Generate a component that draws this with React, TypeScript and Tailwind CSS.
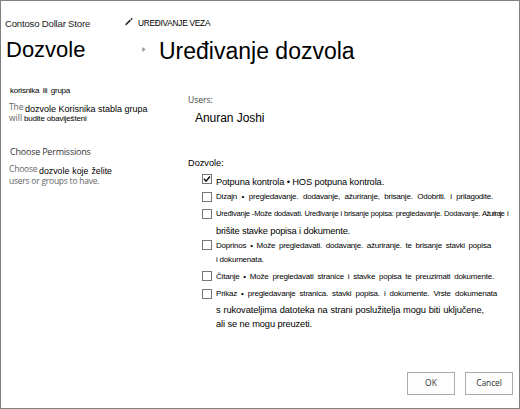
import { clsx } from 'clsx'
import type { ReactNode } from 'react'

const PERMISSIONS = [
  {
    checked: true,
    className: 'h-[18px]',
    lines: [
      {
        text: 'Potpuna kontrola • HOS potpuna kontrola.',
        className: 'mt-[2px] w-[168px] text-[9.3px] tracking-[-0.13px]',
      },
    ],
  },
  {
    className: 'h-[17px]',
    lines: [
      {
        text: 'Dizajn • pregledavanje. dodavanje, ažuriranje, brisanje. Odobriti. i prilagodite.',
        className: '-mt-[1px] w-[277px] text-[8px] tracking-[-0.2px]',
      },
    ],
  },
  {
    className: 'h-[31px]',
    lines: [
      {
        text: 'Uređivanje -Može dodavati. Uređivanje i brisanje popisa: pregledavanje. Dodavanje.',
        tail: true,
        className: '-mt-[1px] w-[264px] text-[7.6px] tracking-[-0.25px]',
      },
      {
        text: 'brišite stavke popisa i dokumente.',
        className: 'mt-[5px] w-[134px] text-[9.3px] tracking-[-0.2px]',
      },
    ],
  },
  {
    className: 'h-[31px]',
    lines: [
      {
        text: 'Doprinos • Može pregledavati. dodavanje. ažuriranje. te brisanje stavki popisa',
        className: 'w-[275px] text-[8px] tracking-[-0.2px]',
      },
      { text: 'i dokumenata.', className: 'mt-[2px] w-[47px] text-[8px] tracking-[-0.2px]' },
    ],
  },
  {
    className: 'h-[18px]',
    lines: [
      {
        text: 'Čitanje • Može pregledavati stranice i stavke popisa te preuzimati dokumente.',
        className: 'w-[278px] text-[8px] tracking-[-0.2px]',
      },
    ],
  },
  {
    className: 'h-[40px]',
    lines: [
      {
        text: 'Prikaz • pregledavanje stranica. stavki popisa. i dokumente. Vrste dokumenata',
        className: '-mt-[1px] w-[281px] text-[8px] tracking-[-0.2px]',
      },
      {
        text: 's rukovateljima datoteka na strani poslužitelja mogu biti uključene,',
        className: 'mt-[4px] w-[268px] text-[9.3px] tracking-[-0.1px]',
      },
      { text: 'ali se ne mogu preuzeti.', className: 'mt-[2px] w-[96px] text-[9.3px] tracking-[-0.13px]' },
    ],
  },
]

function Line({ className, children }: { className: string; children: ReactNode }) {
  return (
    <div className={clsx('h-3 leading-3 whitespace-nowrap [text-align-last:justify]', className)}>
      {children}
    </div>
  )
}

function Checkbox({ checked }: { checked?: boolean }) {
  return (
    <span className="flex h-[10px] w-[10px] shrink-0 items-center justify-center border border-[#777] bg-white">
      {checked && (
        <svg viewBox="0 0 8 8" className="h-2 w-2" fill="none" stroke="#111" strokeWidth="1.5">
          <path d="M1 3.8 3 6.2 7 1.4" />
        </svg>
      )}
    </span>
  )
}

export default function App() {
  return (
    <main className="flex h-[409px] w-[520px] flex-col overflow-hidden border border-[#808080] bg-white font-['Liberation_Sans',sans-serif] text-black">
      <header className="pt-[15px]">
        <div className="flex h-[14px] leading-[14px] whitespace-nowrap">
          <div className="mt-px ml-1 w-[121px] text-[9.6px] tracking-[-0.2px] text-[#222]">
            Contoso Dollar Store
          </div>
          <svg viewBox="0 0 9 9" className="mt-px -ml-px h-[9px] w-[8px]" fill="#333">
            <path d="M0 9 .8 6.8 5.4 2.2 6.8 3.6 2.2 8.2ZM6 1.6 7.4 .2 8.8 1.6 7.4 3Z" />
          </svg>
          <div className="ml-[5px] text-[8.3px] tracking-[-0.25px]">UREĐIVANJE VEZA</div>
        </div>
        <div className="mt-[5px] flex h-7 leading-7 whitespace-nowrap">
          <h1 className="mt-px ml-[5px] w-[136px] text-[22px]">Dozvole</h1>
          <svg viewBox="0 0 4 6" className="mt-3 h-[5px] w-1" fill="#999">
            <path d="M0 0 4 3 0 6Z" />
          </svg>
          <h1 className="mt-[2px] ml-[13px] text-[23px]">Uređivanje dozvola</h1>
        </div>
      </header>

      <div className="flex flex-1">
        <aside className="w-[187px] pt-[22px] pl-2">
          <Line className="ml-px w-[60px] text-[8px] tracking-[-0.25px]">korisnika ili grupa</Line>
          <div className="mt-[5px] flex h-[11px] gap-[2px]">
            <span className="w-[14px] font-['Open_Sans',sans-serif] text-[8.5px] leading-[10px] tracking-[-0.1px] text-[#666]">
              The
            </span>
            <Line className="mt-px w-[122px] text-[9px]">dozvole Korisnika stabla grupa</Line>
          </div>
          <div className="flex h-[11px] gap-[2px]">
            <span className="font-['Open_Sans',sans-serif] text-[8.5px] leading-[10px] text-[#666]">will</span>
            <Line className="w-[62px] text-[8px] tracking-[-0.2px]">budite obaviješteni</Line>
          </div>
          <h2 className="mt-[22px] ml-px h-3 font-['Open_Sans',sans-serif] text-[9px] leading-3 tracking-[-0.22px] text-[#333]">
            Choose Permissions
          </h2>
          <div className="mt-[6px] flex h-[11px] gap-[2px]">
            <span className="w-[28px] font-['Open_Sans',sans-serif] text-[8.5px] leading-[10px] tracking-[-0.2px] text-[#666]">
              Choose
            </span>
            <Line className="mt-px w-[73px] text-[8.8px]">dozvole koje želite</Line>
          </div>
          <p className="font-['Open_Sans',sans-serif] text-[8.5px] leading-[11px] tracking-[-0.24px] text-[#666]">
            users or groups to have.
          </p>
        </aside>

        <section className="flex flex-1 flex-col pt-[31px]">
          <div className="h-3 font-['Open_Sans',sans-serif] text-[8.5px] leading-3 text-[#444]">Users:</div>
          <div className="mt-[4px] ml-[7px] h-4 text-[12px] leading-4 tracking-[-0.05px]">Anuran Joshi</div>
          <div className="mt-[31px] h-3 text-[9.2px] leading-3">Dozvole:</div>
          <ul className="mt-[5px] ml-[14px]">
            {PERMISSIONS.map((item) => (
              <li key={item.lines[0].text} className={clsx('flex gap-[4px]', item.className)}>
                <Checkbox checked={item.checked} />
                <div>
                  {item.lines.map((line) => (
                    <div key={line.text} className="flex whitespace-nowrap">
                      <Line className={line.className}>{line.text}</Line>
                      {'tail' in line && (
                        <span className="-mt-px ml-[2px] flex gap-[3px] text-[7.6px] leading-3">
                          <span className="tracking-[-0.9px]">Ažuriraje</span>
                          <span>i</span>
                        </span>
                      )}
                    </div>
                  ))}
                </div>
              </li>
            ))}
          </ul>
          <div className="mt-auto mr-[6px] mb-[13px] flex justify-end gap-[10px] font-['Open_Sans',sans-serif] text-[8.5px] text-[#333]">
            <button className="h-[23px] w-12 border border-[#ababab] bg-[#fdfdfd]">OK</button>
            <button className="h-[23px] w-12 border border-[#ababab] bg-[#fdfdfd] tracking-[-0.1px]">Cancel</button>
          </div>
        </section>
      </div>
    </main>
  )
}
